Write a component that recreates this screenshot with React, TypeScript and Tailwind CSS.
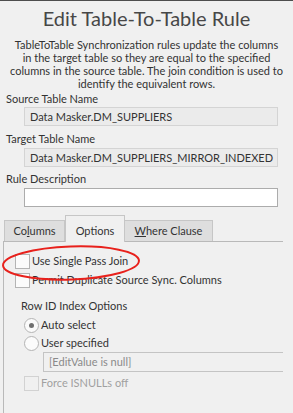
import React from "react";

const ReadOnlyBox = ({ value }: { value: string }) => (
  <div className="ml-[24px] w-[254px] h-[19px] border border-[#d4d4d4] bg-[#ebebeb] pl-[5px] text-[11px] leading-[17px] text-[#333] whitespace-nowrap overflow-hidden">
    {value}
  </div>
);

const CheckBox = ({ label, disabled }: { label: string; disabled?: boolean }) => (
  <div className="flex items-center h-[15px]">
    <div
      className={`w-[15px] h-[15px] border ${
        disabled ? "border-[#d2d2d2] bg-[#f0f0f0]" : "border-[#b4b4b4] bg-[#fbfbfb]"
      }`}
    />
    <span className={`ml-[2px] text-[11px] ${disabled ? "text-[#a0a0a0]" : "text-[#333]"}`}>
      {label}
    </span>
  </div>
);

const Radio = ({ label, checked }: { label: string; checked?: boolean }) => (
  <div className="flex items-center h-[15px]">
    <div className="w-[15px] h-[15px] rounded-full border border-[#b4b4b4] bg-[#fbfbfb] flex items-center justify-center">
      {checked && <div className="w-[5px] h-[5px] rounded-full bg-[#707070]" />}
    </div>
    <span className="ml-[2px] text-[11px] text-[#333]">{label}</span>
  </div>
);

export default function App() {
  return (
    <div className="relative w-[293px] h-[413px] overflow-hidden bg-[#f0f0f0] border-t border-[#4d4d4d] font-['Lato',sans-serif] text-[#333]">
      <div className="pt-[4px] text-center text-[20px] leading-[26px] text-[#474747]">
        Edit Table-To-Table Rule
      </div>
      <div className="mt-[7px] text-center text-[11px] leading-[13px] text-[#333] whitespace-nowrap">
        TableToTable Synchronization rules update the columns
        <br />
        in the target table so they are equal to the specified
        <br />
        columns in the source table. The join condition is used to
        <br />
        identify the equivalent rows.
      </div>

      <div className="mt-[2px] pl-[6px] text-[11px] leading-[14px]">Source Table Name</div>
      <div className="mt-[1px]">
        <ReadOnlyBox value="Data Masker.DM_SUPPLIERS" />
      </div>
      <div className="mt-[6px] pl-[6px] text-[11px] leading-[14px]">Target Table Name</div>
      <div className="mt-[2px]">
        <ReadOnlyBox value="Data Masker.DM_SUPPLIERS_MIRROR_INDEXED" />
      </div>
      <div className="mt-[5px] pl-[6px] text-[11px] leading-[14px]">Rule Description</div>
      <div className="mt-[2px] ml-[24px] w-[254px] h-[19px] border border-[#acacac] bg-white" />

      {/* tab strip */}
      <div className="mt-[8px] ml-[4px] flex items-end h-[26px] text-[11px] relative z-10">
        <div className="w-[61px] h-[21px] border border-b-0 border-[#c6c6c6] bg-[#dedede] flex items-center justify-center">
          Co<span className="underline">l</span>umns
        </div>
        <div className="w-[60px] h-[27px] -mb-[1px] border border-b-0 border-[#c6c6c6] bg-[#f0f0f0] flex items-center justify-center pt-[4px]">
          Options
        </div>
        <div className="w-[88px] h-[21px] border border-b-0 border-l-0 border-[#c6c6c6] bg-[#dedede] flex items-center justify-center">
          <span className="underline">W</span>here Clause
        </div>
      </div>

      <div className="ml-[3px] w-[280px] h-[200px] border-l border-t border-[#b9b9b9] overflow-hidden">
        <div className="pt-[12px] pl-[11px] flex flex-col gap-[4px]">
          <CheckBox label="Use Single Pass Join" />
          <CheckBox label="Permit Duplicate Source Sync. Columns" />
        </div>
        <div className="mt-[11px] pl-[17px] text-[11px] leading-[14px]">Row ID Index Options</div>
        <div className="mt-[5px] pl-[20px] flex flex-col gap-[3px]">
          <Radio label="Auto select" checked />
          <Radio label="User specified" />
        </div>
        <div className="mt-[1px] ml-[39px] w-[260px] h-[20px] border border-[#c4c4c4] bg-[#f0f0f0] pl-[5px] text-[11px] leading-[18px] text-[#8a8a8a]">
          [EditValue is null]
        </div>
        <div className="mt-[4px] pl-[20px]">
          <CheckBox label="Force ISNULLs off" disabled />
        </div>
      </div>

      {/* red highlight ellipse */}
      <svg className="absolute left-0 top-[243px] pointer-events-none" width="145" height="40" viewBox="0 0 145 40">
        <ellipse cx="71" cy="19" rx="68" ry="16.5" transform="rotate(-2 71 19)" fill="none" stroke="#e8211c" strokeWidth="2" />
      </svg>
    </div>
  );
}
